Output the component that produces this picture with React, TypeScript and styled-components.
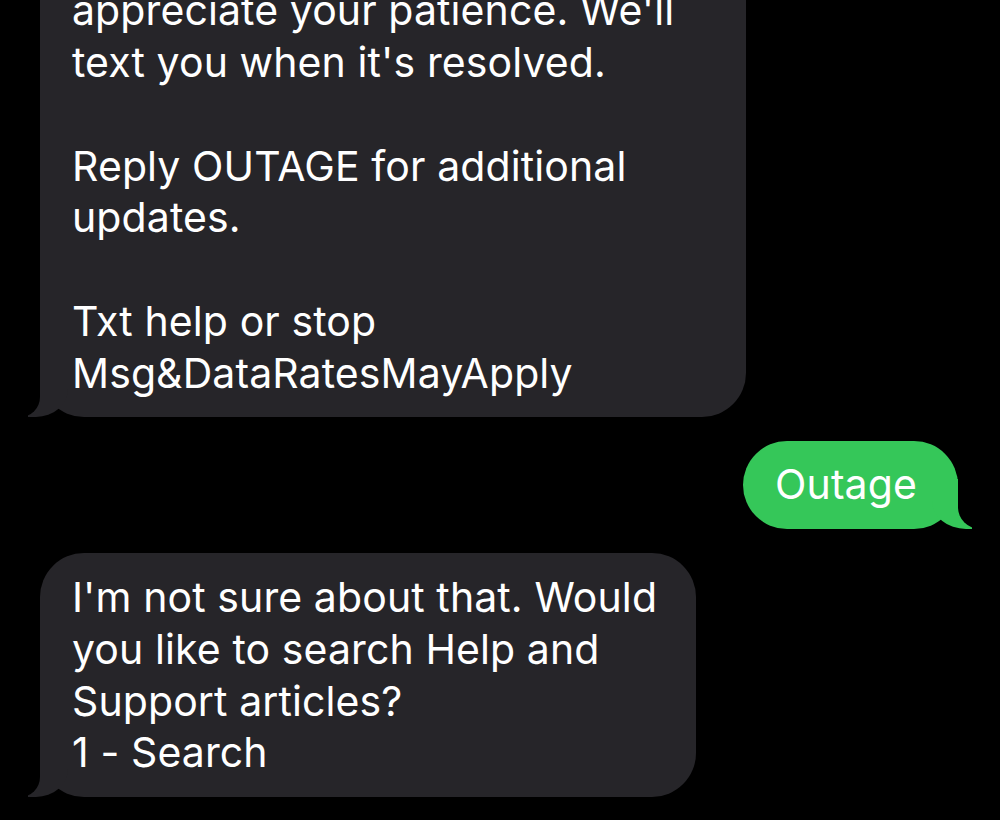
import React from 'react';
import styled, { createGlobalStyle } from 'styled-components';

const GlobalStyle = createGlobalStyle`
  html, body {
    background: #000000;
    margin: 0;
    padding: 0;
  }
`;

const Screen = styled.div`
  box-sizing: border-box;
  display: flex;
  flex-direction: column;
  gap: 24px;
  height: 820px;
  justify-content: flex-end;
  overflow: hidden;
  padding-bottom: 23px;
  width: 1000px;
`;

const Row = styled.div<{ $sent?: boolean }>`
  display: flex;
  justify-content: ${(props) => (props.$sent ? 'flex-end' : 'flex-start')};
  padding: ${(props) => (props.$sent ? '0 42px 0 0' : '0 0 0 40px')};
`;

const Bubble = styled.div<{ $sent?: boolean; $width?: number }>`
  background: ${(props) => (props.$sent ? '#35c759' : '#262529')};
  border-radius: 44px;
  box-sizing: border-box;
  color: #ffffff;
  flex-shrink: 0;
  font-family: Inter, 'Liberation Sans', sans-serif;
  font-size: 41px;
  letter-spacing: 0.1px;
  line-height: 51.75px;
  padding: ${(props) => (props.$sent ? '18px 41px 18px 32px' : '19px 32px 18px')};
  position: relative;
  white-space: pre;
  width: ${(props) => (props.$width ? `${props.$width}px` : 'auto')};

  &::before {
    background: ${(props) => (props.$sent ? '#35c759' : '#262529')};
    bottom: 0;
    content: '';
    height: 50px;
    position: absolute;
    width: 40px;
    ${(props) =>
      props.$sent
        ? 'right: -14px; border-bottom-left-radius: 34px 28px;'
        : 'left: -12px; border-bottom-right-radius: 32px 28px;'}
  }

  &::after {
    background: #000000;
    bottom: 0;
    content: '';
    height: 50px;
    position: absolute;
    width: 52px;
    ${(props) =>
      props.$sent
        ? 'right: -52px; border-bottom-left-radius: 22px;'
        : 'left: -52px; border-bottom-right-radius: 20px;'}
  }
`;

interface Message {
  id: number;
  sent?: boolean;
  width?: number;
  text: string;
}

const messages: Message[] = [
  {
    id: 1,
    width: 706,
    text: [
      "We're aware of an outage in your area and",
      "appreciate your patience. We'll",
      "text you when it's resolved.",
      '',
      'Reply OUTAGE for additional',
      'updates.',
      '',
      'Txt help or stop',
      'Msg&DataRatesMayApply',
    ].join('\n'),
  },
  { id: 2, sent: true, text: 'Outage' },
  {
    id: 3,
    width: 656,
    text: [
      "I'm not sure about that. Would",
      'you like to search Help and',
      'Support articles?',
      '1 - Search',
    ].join('\n'),
  },
];

const App: React.FC = () => (
  <>
    <GlobalStyle />
    <Screen>
      {messages.map((message) => (
        <Row key={message.id} $sent={message.sent}>
          <Bubble $sent={message.sent} $width={message.width}>
            {message.text}
          </Bubble>
        </Row>
      ))}
    </Screen>
  </>
);

export default App;
